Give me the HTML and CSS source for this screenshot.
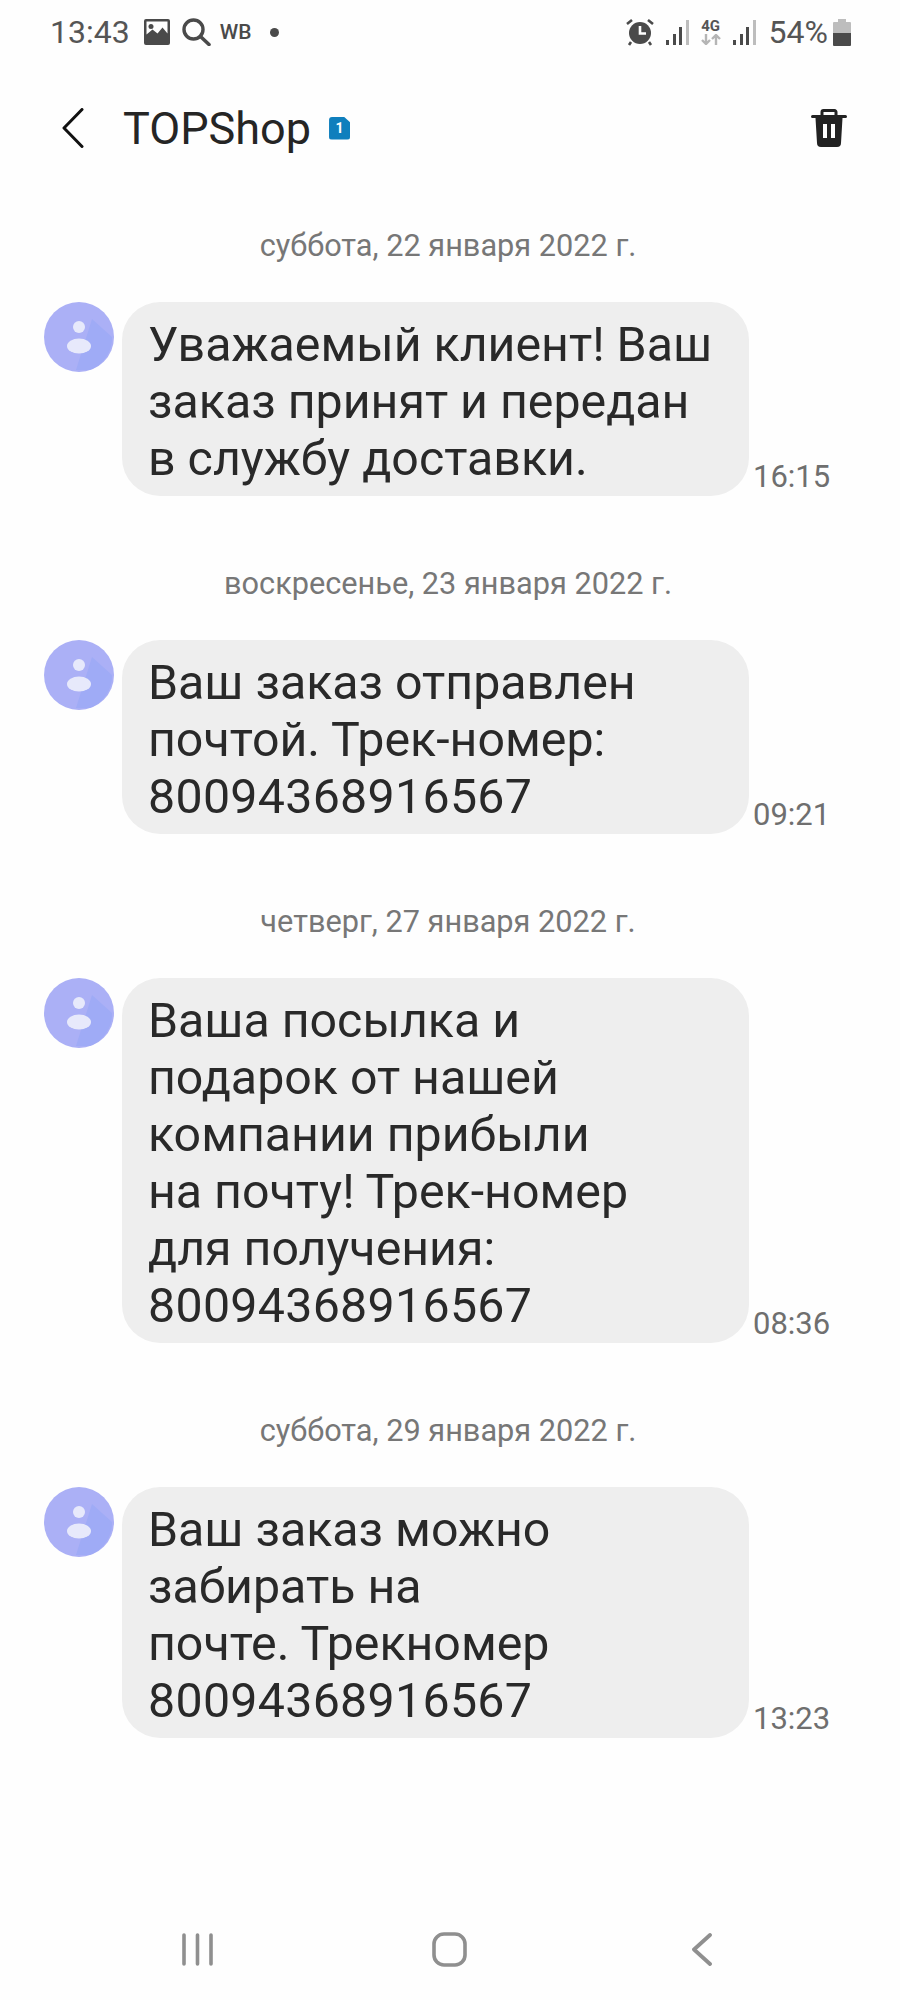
FILE: index.html
```html
<!DOCTYPE html>
<html lang="ru">
<head>
    <meta charset="UTF-8">
    <meta name="viewport" content="width=device-width, initial-scale=1.0">
    <title>TOPShop</title>
    <link rel="stylesheet" href="styles.css">
</head>
<body>
    <div class="phone">
        <div class="status-bar">
            <div class="status-left">
                <span class="clock">13:43</span>
                <svg class="icon-image" viewBox="0 0 26 26">
                    <path fill="#4a4a4a" fill-rule="evenodd" d="M2 0h22a2 2 0 0 1 2 2v22a2 2 0 0 1-2 2H2a2 2 0 0 1-2-2V2a2 2 0 0 1 2-2zM2.500 2.500v13l6-5 5 4 5-6 5 6v-12z"/>
                    <circle cx="7" cy="7.500" r="2.500" fill="#4a4a4a"/>
                </svg>
                <svg class="icon-search" viewBox="0 0 29 28">
                    <circle cx="11.500" cy="11.500" r="9.500" fill="none" stroke="#4a4a4a" stroke-width="3.400"/>
                    <path d="M18.500 18.500l8.500 8" fill="none" stroke="#4a4a4a" stroke-width="3.600" stroke-linecap="round"/>
                </svg>
                <span class="wb">WB</span>
                <span class="status-dot"></span>
            </div>
            <div class="status-right">
                <svg class="icon-alarm" viewBox="0 0 28 28">
                    <circle cx="14" cy="15" r="11" fill="#4a4a4a"/>
                    <path d="M14 8v7.500h6" fill="none" stroke="#fff" stroke-width="2.600"/>
                    <path d="M1 6l5-4M27 6l-5-4M5 24l-2 3M23 24l2 3" fill="none" stroke="#4a4a4a" stroke-width="2.600"/>
                </svg>
                <svg class="icon-signal" viewBox="0 0 23 25">
                    <rect x="0" y="20" width="3" height="5" fill="#4a4a4a"/>
                    <rect x="7" y="14" width="3" height="11" fill="#4a4a4a"/>
                    <rect x="13" y="7" width="3" height="18" fill="#4a4a4a"/>
                    <rect x="20" y="0" width="3" height="25" fill="#bdbdbd"/>
                </svg>
                <div class="net">
                    <span class="net-label">4G</span>
                    <svg class="icon-arrows" viewBox="0 0 20 11">
                        <path d="M5 0v10M1 6l4 4 4-4" fill="none" stroke="#b5b5b5" stroke-width="2.400"/>
                        <path d="M15 11V1M11 5l4-4 4 4" fill="none" stroke="#b5b5b5" stroke-width="2.400"/>
                    </svg>
                </div>
                <svg class="icon-signal" viewBox="0 0 23 25">
                    <rect x="0" y="20" width="3" height="5" fill="#4a4a4a"/>
                    <rect x="7" y="14" width="3" height="11" fill="#4a4a4a"/>
                    <rect x="13" y="7" width="3" height="18" fill="#4a4a4a"/>
                    <rect x="20" y="0" width="3" height="25" fill="#bdbdbd"/>
                </svg>
                <span class="battery-text">54%</span>
                <svg class="icon-battery" viewBox="0 0 18 27">
                    <path fill="#bdbdbd" d="M5 0h8v3h4a1 1 0 0 1 1 1v10H0V4a1 1 0 0 1 1-1h4z"/>
                    <path fill="#4a4a4a" d="M0 14h18v12a1 1 0 0 1-1 1H1a1 1 0 0 1-1-1z"/>
                </svg>
            </div>
        </div>

        <div class="title-bar">
            <div class="title-left">
                <svg class="icon-back" viewBox="0 0 22 40">
                    <path d="M20 1.500L2 20l18 18.500" fill="none" stroke="#111" stroke-width="3" stroke-linecap="round" stroke-linejoin="round"/>
                </svg>
                <span class="title">TOPShop</span>
                <span class="sim-badge">1</span>
            </div>
            <svg class="icon-trash" viewBox="0 0 36 38">
                <path fill="none" stroke="#222" stroke-width="3" d="M11 6V3a1.500 1.500 0 0 1 1.500-1.500h11A1.500 1.500 0 0 1 25 3v3"/>
                <path fill="none" stroke="#222" stroke-width="3" stroke-linecap="round" d="M1.500 7.500h33"/>
                <path fill="#222" fill-rule="evenodd" d="M4.500 9h27l-1.500 25a4 4 0 0 1-4 4H10a4 4 0 0 1-4-4zM12 15v14h4V15zM20 15v14h4V15z"/>
            </svg>
        </div>

        <div class="messages">
            <div class="date">суббота, 22 января 2022 г.</div>
            <div class="msg">
                <div class="avatar">
                    <svg viewBox="0 0 70 70">
                        <path fill="#9fabf6" d="M48 17L68 35a34 34 0 0 1-22 33H32z"/>
                        <circle cx="35" cy="25" r="6" fill="#e7e9fb"/>
                        <ellipse cx="35" cy="44" rx="12" ry="7.500" fill="#e7e9fb"/>
                    </svg>
                </div>
                <div class="bubble">Уважаемый клиент! Ваш<br>заказ принят и передан<br>в службу доставки.</div>
                <div class="time">16:15</div>
            </div>

            <div class="date">воскресенье, 23 января 2022 г.</div>
            <div class="msg">
                <div class="avatar">
                    <svg viewBox="0 0 70 70">
                        <path fill="#9fabf6" d="M48 17L68 35a34 34 0 0 1-22 33H32z"/>
                        <circle cx="35" cy="25" r="6" fill="#e7e9fb"/>
                        <ellipse cx="35" cy="44" rx="12" ry="7.500" fill="#e7e9fb"/>
                    </svg>
                </div>
                <div class="bubble">Ваш заказ отправлен<br>почтой. Трек-номер:<br><span class="track">80094368916567</span></div>
                <div class="time">09:21</div>
            </div>

            <div class="date">четверг, 27 января 2022 г.</div>
            <div class="msg">
                <div class="avatar">
                    <svg viewBox="0 0 70 70">
                        <path fill="#9fabf6" d="M48 17L68 35a34 34 0 0 1-22 33H32z"/>
                        <circle cx="35" cy="25" r="6" fill="#e7e9fb"/>
                        <ellipse cx="35" cy="44" rx="12" ry="7.500" fill="#e7e9fb"/>
                    </svg>
                </div>
                <div class="bubble">Ваша посылка и<br>подарок от нашей<br>компании прибыли<br>на почту! Трек-номер<br>для получения:<br><span class="track">80094368916567</span></div>
                <div class="time">08:36</div>
            </div>

            <div class="date">суббота, 29 января 2022 г.</div>
            <div class="msg">
                <div class="avatar">
                    <svg viewBox="0 0 70 70">
                        <path fill="#9fabf6" d="M48 17L68 35a34 34 0 0 1-22 33H32z"/>
                        <circle cx="35" cy="25" r="6" fill="#e7e9fb"/>
                        <ellipse cx="35" cy="44" rx="12" ry="7.500" fill="#e7e9fb"/>
                    </svg>
                </div>
                <div class="bubble">Ваш заказ можно<br>забирать на<br>почте. Трекномер<br><span class="track">80094368916567</span></div>
                <div class="time">13:23</div>
            </div>
        </div>

        <div class="nav-bar">
            <svg class="icon-recent" viewBox="0 0 31 33">
                <path d="M2 2v29M15.500 2v29M29 2v29" fill="none" stroke="#8f8f8f" stroke-width="3.600" stroke-linecap="round"/>
            </svg>
            <svg class="icon-home" viewBox="0 0 35 35">
                <rect x="2" y="2" width="31" height="31" rx="10" fill="none" stroke="#8f8f8f" stroke-width="3.600"/>
            </svg>
            <svg class="icon-nav-back" viewBox="0 0 20 33">
                <path d="M18 2L2 16.500 18 31" fill="none" stroke="#8f8f8f" stroke-width="3.800" stroke-linecap="round" stroke-linejoin="round"/>
            </svg>
        </div>
    </div>
</body>
</html>
```
FILE: styles.css
```css
body {
    margin: 0;
    background: #fefefe;
    font-family: Roboto, "Liberation Sans", sans-serif;
}

.phone {
    width: 900px;
    height: 2000px;
    display: flex;
    flex-direction: column;
    background: #fefefe;
}

/* status bar */
.status-bar {
    height: 46px;
    padding: 9px 49px 0 50px;
    display: flex;
    justify-content: space-between;
    align-items: center;
}

.status-left, .status-right {
    display: flex;
    align-items: center;
}

.clock {
    font-size: 32px;
    color: #555;
    margin-right: 14px;
}

.icon-image {
    width: 26px;
    height: 26px;
    margin-right: 12px;
}

.icon-search {
    width: 29px;
    height: 28px;
    margin-right: 9px;
}

.wb {
    font-size: 21px;
    font-weight: 500;
    color: #4a4a4a;
    margin-right: 19px;
}

.status-dot {
    width: 9px;
    height: 9px;
    border-radius: 50%;
    background: #4a4a4a;
}

.icon-alarm {
    width: 28px;
    height: 28px;
    margin-right: 12px;
}

.icon-signal {
    width: 23px;
    height: 25px;
}

.net {
    width: 20px;
    margin: 0 12px;
    display: flex;
    flex-direction: column;
    align-items: center;
}

.net-label {
    font-size: 15px;
    line-height: 14px;
    font-weight: 700;
    color: #555;
}

.icon-arrows {
    width: 20px;
    height: 11px;
    margin-top: 1px;
}

.battery-text {
    font-size: 32px;
    color: #555;
    margin: 0 5px 0 13px;
}

.icon-battery {
    width: 18px;
    height: 27px;
}

/* title */
.title-bar {
    height: 64px;
    margin-top: 41px;
    padding: 0 53px 0 62px;
    display: flex;
    justify-content: space-between;
    align-items: center;
}

.title-left {
    display: flex;
    align-items: center;
}

.icon-back {
    width: 22px;
    height: 40px;
    margin-right: 39px;
}

.title {
    font-size: 45px;
    color: #252525;
    margin-right: 18px;
}

.sim-badge {
    width: 21px;
    height: 23px;
    background: #0f7fbd;
    border-radius: 3px 0 3px 3px;
    clip-path: polygon(0 0, 70% 0, 100% 25%, 100% 100%, 0 100%);
    color: #fff;
    font-size: 14px;
    font-weight: 700;
    line-height: 23px;
    text-align: center;
}

.icon-trash {
    width: 36px;
    height: 38px;
}

/* messages */
.messages {
    flex: 1;
    padding-top: 66px;
}

.date {
    height: 40px;
    line-height: 40px;
    text-align: center;
    font-size: 30.700px;
    color: #777;
    margin-bottom: 36px;
    padding-right: 4px;
}

.msg {
    display: flex;
    align-items: flex-start;
    padding-left: 44px;
    margin-bottom: 68px;
}

.avatar {
    width: 70px;
    height: 70px;
    border-radius: 50%;
    overflow: hidden;
    background: #abb0f6;
    margin-right: 8px;
    flex-shrink: 0;
}

.avatar svg {
    display: block;
    width: 70px;
    height: 70px;
}

.bubble {
    width: 627px;
    box-sizing: border-box;
    padding: 14px 10px 9px 26px;
    background: #eeeeee;
    border-radius: 38px;
    font-size: 48.300px;
    line-height: 57px;
    color: #292929;
}

.track {
    letter-spacing: 0.300px;
}

.time {
    align-self: flex-end;
    font-size: 31px;
    line-height: 34px;
    color: #6f6f6f;
    margin-left: 4px;
    margin-bottom: 2px;
}

/* bottom nav */
.nav-bar {
    height: 70px;
    padding-bottom: 16px;
    display: flex;
    align-items: center;
}

.icon-recent {
    width: 31px;
    height: 33px;
    margin-left: 182px;
}

.icon-home {
    width: 35px;
    height: 35px;
    margin-left: 219px;
}

.icon-nav-back {
    width: 20px;
    height: 33px;
    margin-left: 225px;
}
```
